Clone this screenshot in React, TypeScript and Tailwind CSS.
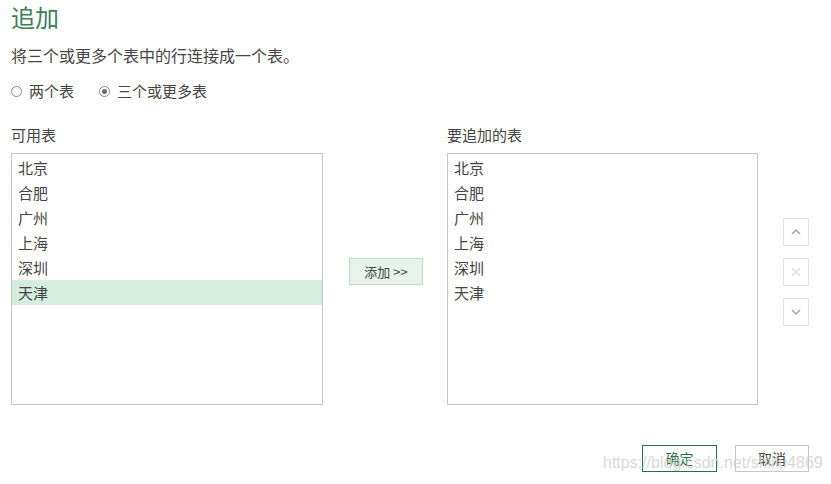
import React from "react";

const items = ["北京", "合肥", "广州", "上海", "深圳", "天津"];
const font = { fontFamily: '"Noto Sans CJK SC", "Microsoft YaHei", sans-serif' };

function ListBox({ selected, width }: { selected?: number; width: string }) {
  return (
    <div className={`${width} h-[252px] border border-[#c6c6c6] bg-white pt-[1px]`}>
      {items.map((t, i) => (
        <div
          key={t}
          className={`h-[25px] leading-[25px] pl-[6px] text-[15px] text-[#444] ${
            i === selected ? "bg-[#d3eedf]" : ""
          }`}
        >
          {t}
        </div>
      ))}
    </div>
  );
}

function Radio({ checked, label }: { checked?: boolean; label: string }) {
  return (
    <div className="flex items-center">
      <span className="w-[11px] h-[11px] rounded-full border border-[#8a8a8a] bg-white flex items-center justify-center">
        {checked && <span className="w-[5px] h-[5px] rounded-full bg-[#6a6a6a]" />}
      </span>
      <span className="ml-[7px] text-[15px] text-[#444]">{label}</span>
    </div>
  );
}

export default function App() {
  return (
    <div className="relative w-[831px] h-[484px] bg-white overflow-hidden pl-[11px]" style={font}>
      <div className="text-[24px] leading-[34px] text-[#3c8059] pt-0">追加</div>
      <div className="mt-[10px] text-[16px] leading-[22px] text-[#444]">将三个或更多个表中的行连接成一个表。</div>
      <div className="mt-[15px] flex items-center gap-[25px] h-[20px]">
        <Radio label="两个表" />
        <Radio checked label="三个或更多表" />
      </div>
      <div className="mt-[24px] flex items-start">
        <div className="flex flex-col">
          <div className="text-[15px] leading-[20px] text-[#444] h-[20px]">可用表</div>
          <div className="mt-[8px]">
            <ListBox width="w-[312px]" selected={5} />
          </div>
        </div>
        <div className="ml-[26px] mt-[133px] w-[74px] h-[27px] border border-[#bfdcc9] bg-[#e6f2ea] flex items-center justify-center text-[13px] text-[#444]">
          添加 &gt;&gt;
        </div>
        <div className="ml-[24px] flex flex-col">
          <div className="text-[15px] leading-[20px] text-[#444] h-[20px]">要追加的表</div>
          <div className="mt-[8px]">
            <ListBox width="w-[311px]" />
          </div>
        </div>
        <div className="ml-[25px] mt-[93px] flex flex-col gap-[12px]">
          <div className="w-[26px] h-[28px] border border-[#e2e2e2] flex items-center justify-center">
            <svg width="10" height="6" viewBox="0 0 10 6"><path d="M1 5 L5 1 L9 5" fill="none" stroke="#a8a8a8" strokeWidth="1.6" /></svg>
          </div>
          <div className="w-[26px] h-[28px] border border-[#e2e2e2] flex items-center justify-center">
            <svg width="10" height="10" viewBox="0 0 10 10"><path d="M1 1 L9 9 M9 1 L1 9" fill="none" stroke="#dcdcdc" strokeWidth="1.2" /></svg>
          </div>
          <div className="w-[26px] h-[28px] border border-[#e2e2e2] flex items-center justify-center">
            <svg width="10" height="6" viewBox="0 0 10 6"><path d="M1 1 L5 5 L9 1" fill="none" stroke="#a8a8a8" strokeWidth="1.6" /></svg>
          </div>
        </div>
      </div>
      <div className="mt-[40px] flex justify-end pr-[22px] gap-[18px]">
        <div className="w-[75px] h-[27px] border border-[#217346] flex items-center justify-center text-[14px] text-[#2f6e4a]">确定</div>
        <div className="w-[74px] h-[27px] border border-[#c6c6c6] flex items-center justify-center text-[14px] text-[#444]">取消</div>
      </div>
      <div
        className="absolute left-[603px] top-[453px] text-[16px] leading-[20px] text-[#cfcfcf] opacity-80 pointer-events-none"
        style={{ fontFamily: '"Liberation Sans", Arial, sans-serif' }}
      >
        https://blog.csdn.net/shiliu4869
      </div>
    </div>
  );
}
